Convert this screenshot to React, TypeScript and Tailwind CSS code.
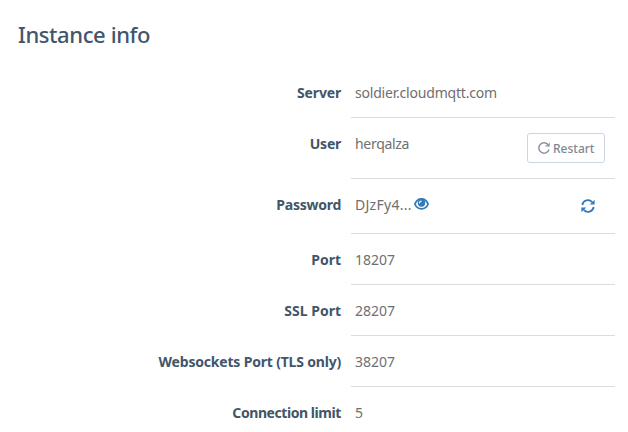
import type { ReactNode } from "react";

function RestartIcon() {
  return (
    <svg className="block h-3 w-3 shrink-0" viewBox="0 0 12 12" fill="none">
      <path d="M10.300 3A5.200 5.200 0 1 0 11 7.500" stroke="#8590a0" strokeWidth="1.400" />
      <path d="M11.700.300v4.300H7.300V3.500l2.400-.2z" fill="#8590a0" />
    </svg>
  );
}

function EyeIcon() {
  return (
    <svg className="mt-[3px] ml-[2px] block h-3 w-[15px] shrink-0" viewBox="0 0 15 12" fill="none">
      <path
        d="M.9 6C2.200 2.700 4.600 1 7.500 1S12.800 2.700 14.100 6C12.800 9.200 10.400 10.900 7.500 10.900S2.200 9.200.9 6z"
        stroke="#337ab7"
        strokeWidth="1.800"
      />
      <circle cx="7.500" cy="5" r="3.700" fill="#337ab7" />
      <path d="M5.500 5.200A2 2 0 0 1 7.500 3.200" stroke="#fff" strokeWidth="1.200" />
    </svg>
  );
}

function RefreshIcon() {
  return (
    <svg className="block h-[14px] w-[14px]" viewBox="0 0 14 14" fill="none">
      <path d="M1.300 6A5.700 5.700 0 0 1 11.200 3.200M12.700 8A5.700 5.700 0 0 1 2.800 10.800" stroke="#337ab7" strokeWidth="1.800" />
      <path d="M13.600.800v4.800H8.800zM.400 13.200V8.400h4.800z" fill="#337ab7" />
    </svg>
  );
}

type RowProps = {
  label: string;
  labelClass?: string;
  value: string;
  valueClass?: string;
  rowClass?: string;
  icon?: ReactNode;
  action?: ReactNode;
};

function Row({ label, labelClass = "", value, valueClass = "", rowClass = "h-[51px]", icon, action }: RowProps) {
  return (
    <div className={`flex ${rowClass}`}>
      <dt className="w-[351px] shrink-0 pt-4 pr-[10px] text-right font-bold text-[#42566a]">
        <span className={labelClass}>{label}</span>
      </dt>
      <dd className="flex w-[264px] items-start border-b border-[#dcdcdc] pt-4 pl-1 text-[#6f6f6f]">
        <span className={valueClass}>{value}</span>
        {icon}
        {action}
      </dd>
    </div>
  );
}

export default function App() {
  return (
    <main className="h-[432px] overflow-hidden bg-white font-['Noto_Sans',sans-serif] text-[14px] leading-5">
      <h1 className="h-[67px] pt-[19px] pl-[18px] text-[22px] leading-[30px] font-medium tracking-[-0.4px] text-[#42566a]">
        Instance info
      </h1>
      <dl>
        <Row label="Server" labelClass="tracking-[-0.17px]" value="soldier.cloudmqtt.com" valueClass="tracking-[-0.2px]" />
        <Row
          label="User"
          labelClass="tracking-[-0.25px]"
          value="herqalza"
          valueClass="tracking-[-0.3px]"
          rowClass="h-[61px]"
          action={
            <button className="mt-[-1px] mr-[10px] ml-auto flex h-[30px] w-[78px] items-center gap-[3px] rounded-[3px] border border-[#cbd5e5] pl-[10px] text-[12px] font-medium text-[#7f8792]">
              <RestartIcon />
              <span className="pt-[2px]">Restart</span>
            </button>
          }
        />
        <Row
          label="Password"
          labelClass="tracking-[-0.25px]"
          value="DJzFy4..."
          valueClass="tracking-[0.28px]"
          rowClass="h-[55px]"
          icon={<EyeIcon />}
          action={
            <button className="mt-1 mr-5 ml-auto">
              <RefreshIcon />
            </button>
          }
        />
        <Row label="Port" value="18207" />
        <Row label="SSL Port" value="28207" />
        <Row label="Websockets Port (TLS only)" labelClass="tracking-[-0.19px]" value="38207" />
        <Row label="Connection limit" labelClass="tracking-[-0.43px]" value="5" />
      </dl>
    </main>
  );
}
